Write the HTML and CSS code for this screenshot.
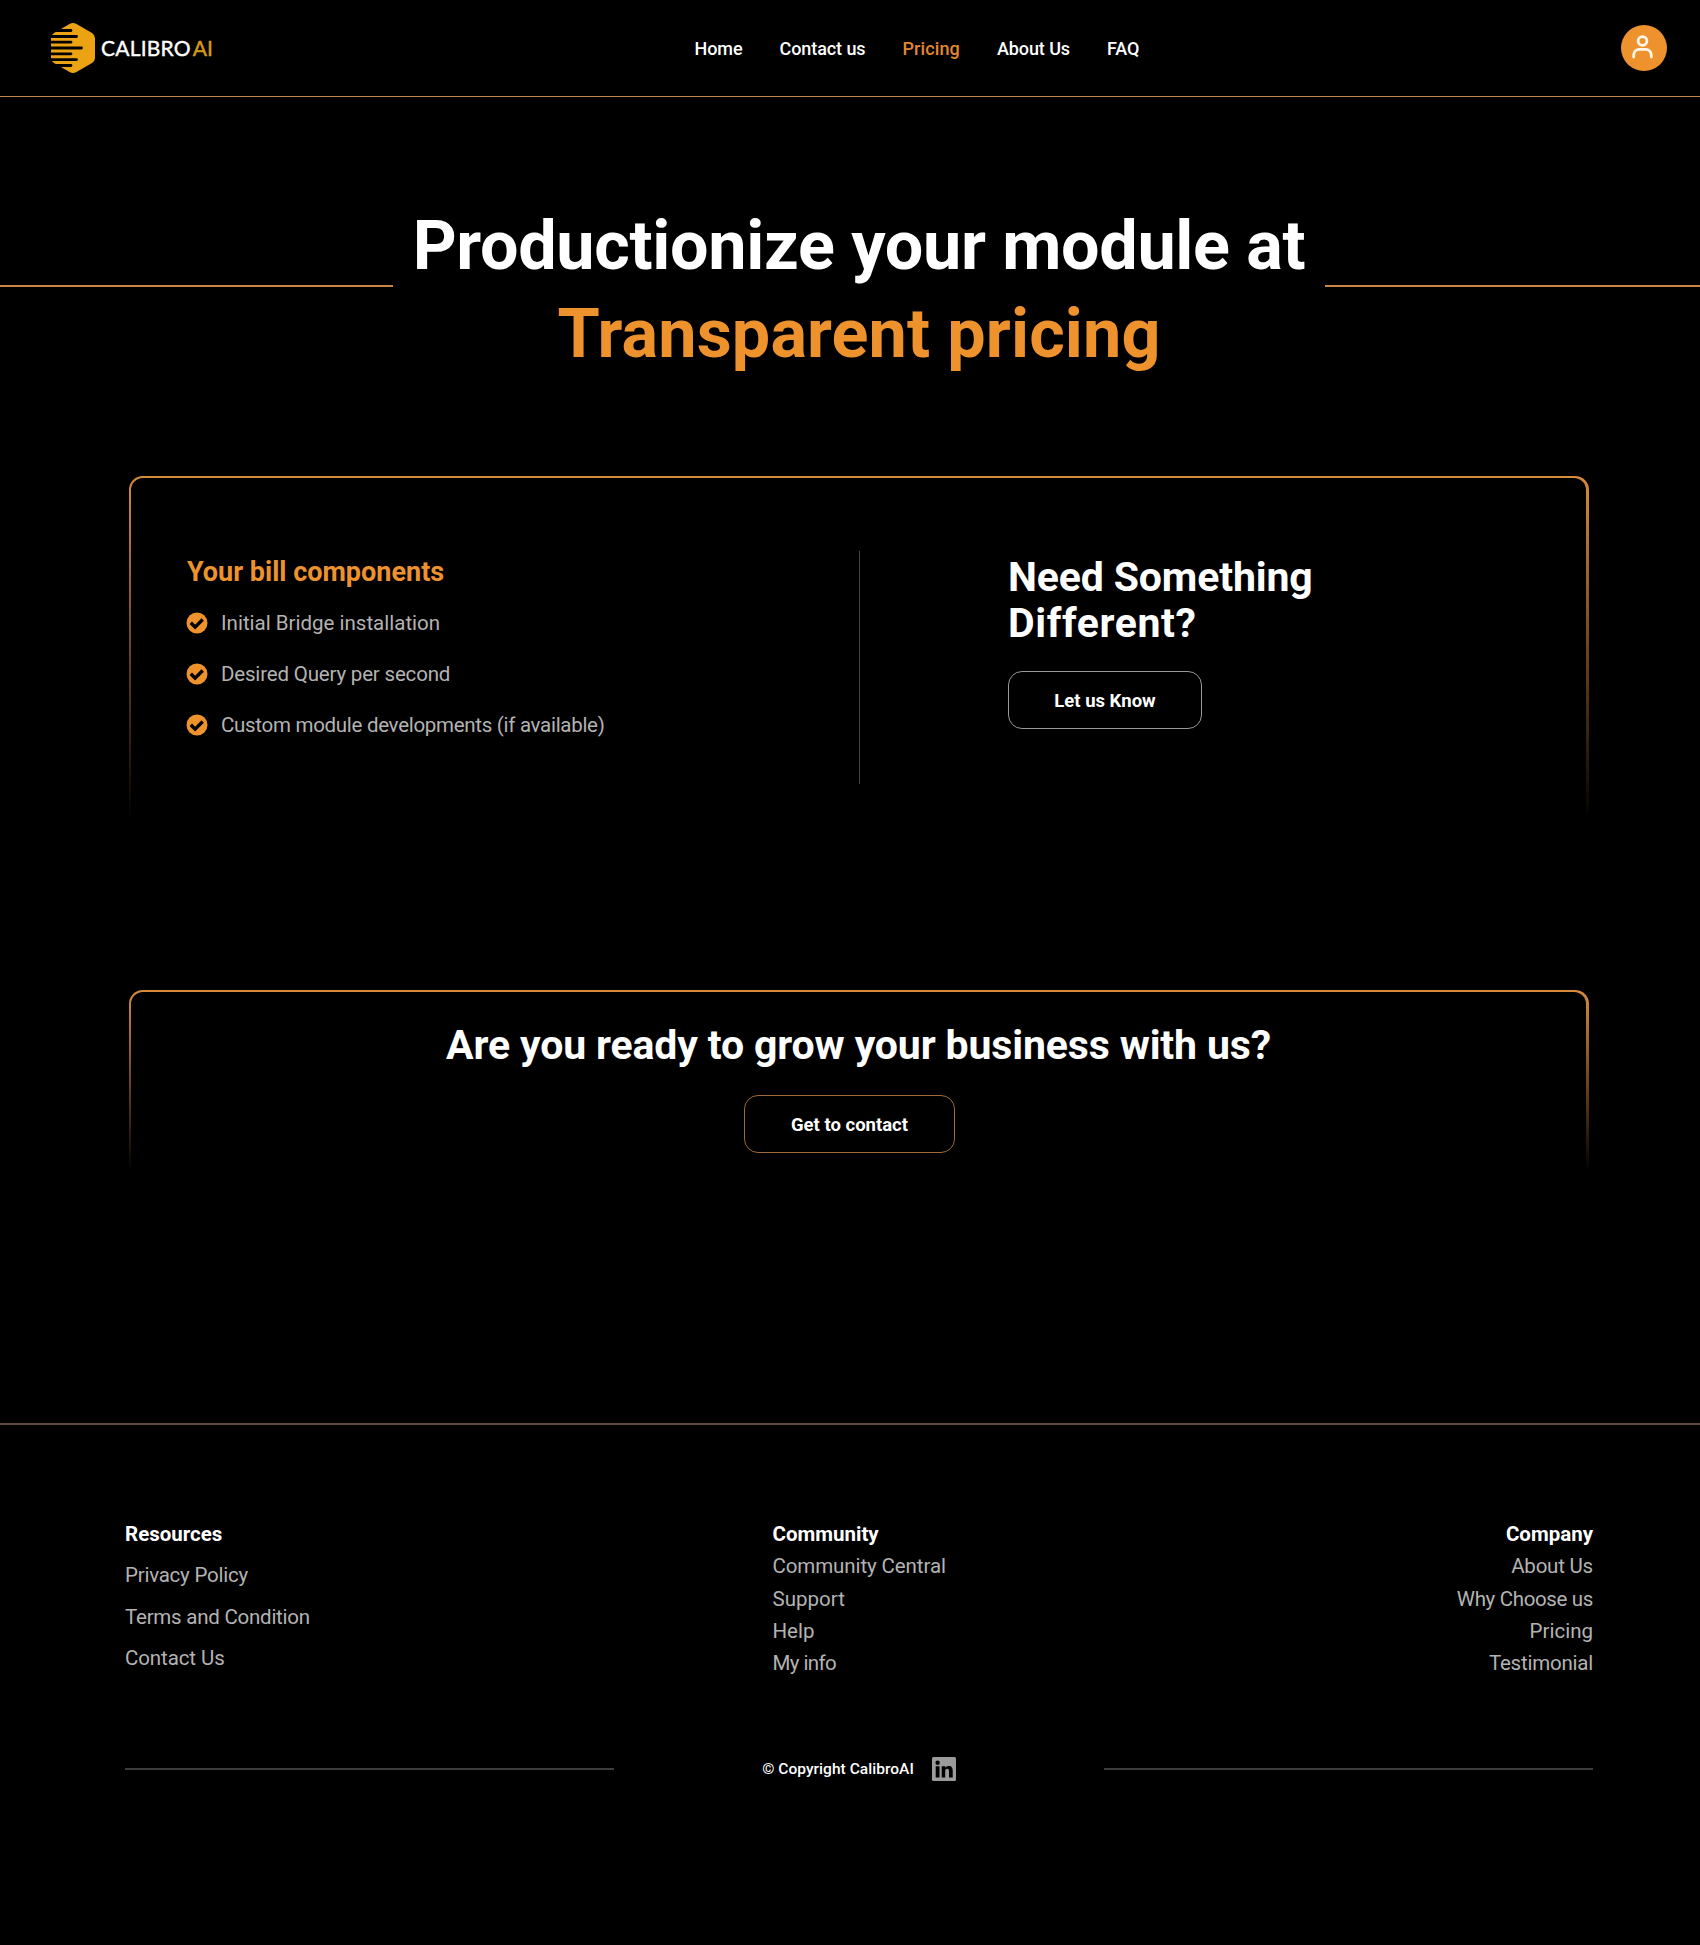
FILE: index.html
```html
<!DOCTYPE html>
<html lang="en">
<head>
<meta charset="utf-8">
<title>CalibroAI – Pricing</title>
<link rel="stylesheet" href="styles.css">
</head>
<body>
<header class="header">
  <a class="logo">
    <svg class="logo-mark" viewBox="0 0 44 50" width="44" height="50">
      <path fill="#eba313" d="M18.500 1 Q22 -1 25.500 1 L41 10 Q44 12 44 15 V35 Q44 38 41 40 L25.500 49 Q22 51 18.500 49 L3 40 Q0 38 0 35 V15 Q0 12 3 10 Z"/>
      <g stroke="#000" stroke-width="2.800" stroke-linecap="round">
        <path d="M0 7.500H20M0 13.500H25.500M0 19.200H20M0 25H30.500M0 30.800H20M0 36.600H25.500M0 42.500H20"/>
      </g>
    </svg>
    <span class="logo-text"><span class="logo-name">CALIBRO</span><span class="logo-ai">AI</span></span>
  </a>
  <nav class="nav">
    <a class="nav-link">Home</a>
    <a class="nav-link">Contact us</a>
    <a class="nav-link nav-link-active">Pricing</a>
    <a class="nav-link">About Us</a>
    <a class="nav-link">FAQ</a>
  </nav>
  <a class="avatar">
    <svg viewBox="0 0 21 24" width="21" height="24" fill="none" stroke="#fff8ea" stroke-width="2.800" stroke-linecap="round">
      <circle cx="10.500" cy="6" r="4.400"/>
      <path d="M1.700 22V20a5.600 5.600 0 0 1 5.600-5.600h6.400a5.600 5.600 0 0 1 5.600 5.600V22"/>
    </svg>
  </a>
</header>
<main>
  <section class="hero">
    <span class="hero-line"></span>
    <h1 class="hero-title"><span class="hero-lead">Productionize your module at</span><br><span class="hero-accent">Transparent pricing</span></h1>
    <span class="hero-line"></span>
  </section>
  <section class="card card-bill">
    <div class="card-body bill">
      <div class="bill-left">
        <h2 class="bill-title">Your bill components</h2>
        <ul class="bill-list">
          <li><svg class="check" viewBox="0 0 22 22"><circle cx="11" cy="11" r="10.500"/><path d="M4.800 10.800l4.300 4.300 7.600-7.600"/></svg><span>Initial Bridge installation</span></li>
          <li><svg class="check" viewBox="0 0 22 22"><circle cx="11" cy="11" r="10.500"/><path d="M4.800 10.800l4.300 4.300 7.600-7.600"/></svg><span>Desired Query per second</span></li>
          <li><svg class="check" viewBox="0 0 22 22"><circle cx="11" cy="11" r="10.500"/><path d="M4.800 10.800l4.300 4.300 7.600-7.600"/></svg><span>Custom module developments (if available)</span></li>
        </ul>
      </div>
      <div class="bill-right">
        <h2 class="section-title need-title"><span>Need Something</span><br><span class="need-second">Different?</span></h2>
        <a class="button">Let us Know</a>
      </div>
    </div>
  </section>
  <section class="card card-cta">
    <div class="card-body cta">
      <h2 class="section-title cta-title">Are you ready to grow your business with us?</h2>
      <a class="button button-accent">Get to contact</a>
    </div>
  </section>
</main>
<footer class="footer">
  <div class="footer-cols">
    <div class="col col-wide">
      <h3>Resources</h3>
      <a>Privacy Policy</a><a>Terms and Condition</a><a>Contact Us</a>
    </div>
    <div class="col col-mid">
      <h3>Community</h3>
      <a>Community Central</a><a>Support</a><a>Help</a><a>My info</a>
    </div>
    <div class="col col-right">
      <h3>Company</h3>
      <a>About Us</a><a>Why Choose us</a><a>Pricing</a><a>Testimonial</a>
    </div>
  </div>
  <div class="footer-bottom">
    <span class="footer-line"></span>
    <span class="copy"><span>© Copyright CalibroAI</span>
      <svg class="linkedin" viewBox="0 0 24 24" width="24" height="24"><rect width="24" height="24" rx="1.500" fill="#9b9b9b"/><circle cx="5.600" cy="5.700" r="2.200"/><path d="M3.700 9.200h3.800v11.300H3.700zM9.700 9.200h3.500v1.600c.5-1 1.700-1.900 3.500-1.900 3.300 0 4 2.100 4 5v6.600H17v-5.800c0-1.500 0-3-1.800-3s-2 1.400-2 2.900v5.900H9.700z"/></svg>
    </span>
    <span class="footer-line"></span>
  </div>
</footer>
</body>
</html>
```
FILE: styles.css
```css
* { box-sizing: border-box; }
body { margin: 0; background: #000; color: #fff; font-family: Roboto, "Liberation Sans", sans-serif; overflow-x: hidden; }
h1, h2, h3, ul { margin: 0; padding: 0; font-weight: 700; }

.header { display: grid; grid-template-columns: 643.500px auto 1fr; align-items: center; height: 97px; padding: 0 33px 0 51px; border-bottom: 1px solid #bf8752; }
.logo { display: flex; align-items: center; gap: 6px; }
.logo-mark { margin-bottom: 1px; }
.logo-text { display: flex; gap: 2px; font: 400 21px/24px Lato, sans-serif; -webkit-text-stroke: 0.4px currentColor; }
.logo-name { letter-spacing: 0.2px; }
.logo-ai { color: #d99a1c; }
.nav { display: flex; gap: 37px; font-size: 18px; font-weight: 500; line-height: 24px; letter-spacing: -0.080px; padding-top: 1px; }
.nav-link-active { color: #e2862f; letter-spacing: 0.1px; }
.avatar { justify-self: end; display: flex; align-items: center; justify-content: center; width: 46px; height: 46px; padding: 0 3px 2px 0; border-radius: 50%; background: #ed922d; }

.hero { display: flex; align-items: center; gap: 20px; width: 1718px; margin-top: 106px; }
.hero-line { flex: 1; height: 2px; margin-bottom: 9px; background: #c98545; }
.hero-title { font-size: 68.300px; line-height: 87.500px; text-align: center; white-space: nowrap; }
.hero-lead { letter-spacing: -0.320px; }
.hero-accent { color: #ed922d; letter-spacing: 0.120px; }

.card { width: 1460px; margin-left: 129px; padding: 2px 3px 0 2px; border-radius: 14px 14px 0 0; background: linear-gradient(#d98b3c, transparent); }
.card-body { height: 100%; border-radius: 12px 12px 0 0; background: #000; }
.card-bill { height: 345px; margin-top: 98px; }
.card-cta { height: 182px; margin-top: 169px; }

.bill { display: flex; padding-top: 73px; }
.bill-left { width: 729px; height: 233px; padding: 5px 0 0 55px; border-right: 1px solid #444; }
.bill-title { padding-left: 1px; color: #ed922d; font-size: 27px; line-height: 32px; }
.bill-list { list-style: none; margin-top: 10px; font-weight: 400; font-size: 20.500px; color: #b3b3b3; }
.bill-list li { display: flex; align-items: center; gap: 13px; height: 50.750px; }
.bill-list li:nth-child(2) { letter-spacing: -0.180px; }
.bill-list li:nth-child(3) { letter-spacing: -0.290px; }
.check { width: 22px; height: 22px; }
.check circle { fill: #ed922d; }
.check path { fill: none; stroke: #000; stroke-width: 3.400; }
.bill-right { padding: 3px 0 0 148px; }
.section-title { font-size: 41px; line-height: 46px; }
.need-title { letter-spacing: -0.150px; }
.need-second { letter-spacing: 0.600px; }

.button { display: flex; align-items: center; justify-content: center; width: 194px; height: 58px; margin-top: 25px; padding-top: 1px; border: 1px solid #999; border-radius: 14px; font-size: 18.500px; font-weight: 700; }
.button-accent { width: 211px; margin: 27px 18px 0 0; border-color: #a06a3a; }
.cta { display: flex; flex-direction: column; align-items: center; padding-top: 30px; }
.cta-title { letter-spacing: -0.140px; }

.footer { margin-top: 251px; padding: 93px 107px 164px 125px; border-top: 2px solid #5f4a40; }
.footer-cols { display: grid; grid-template-columns: 647.500px 1fr auto; font-size: 20.500px; line-height: 32.250px; }
.col { display: flex; flex-direction: column; color: #b3b3b3; }
.col h3 { color: #fff; font-size: 20.500px; letter-spacing: 0; }
.col-wide { line-height: 41.500px; letter-spacing: -0.240px; }
.col-wide h3 { line-height: 32.250px; margin-bottom: 5px; }
.col-wide a:nth-of-type(3) { letter-spacing: -0.100px; }
.col-mid a:nth-of-type(1) { letter-spacing: -0.100px; }
.col-mid a:nth-of-type(4) { letter-spacing: -0.600px; }
.col-right { text-align: right; letter-spacing: -0.220px; }
.col-right a:nth-of-type(2) { letter-spacing: -0.350px; }
.col-right a:nth-of-type(3) { letter-spacing: 0; }
.footer-bottom { display: grid; grid-template-columns: 489px 1fr 489px; align-items: center; margin-top: 77.250px; }
.footer-line { height: 2px; background: #3c3c3c; }
.copy { display: flex; align-items: center; justify-content: center; gap: 18px; font-size: 15.500px; font-weight: 500; letter-spacing: 0.040px; }
```
